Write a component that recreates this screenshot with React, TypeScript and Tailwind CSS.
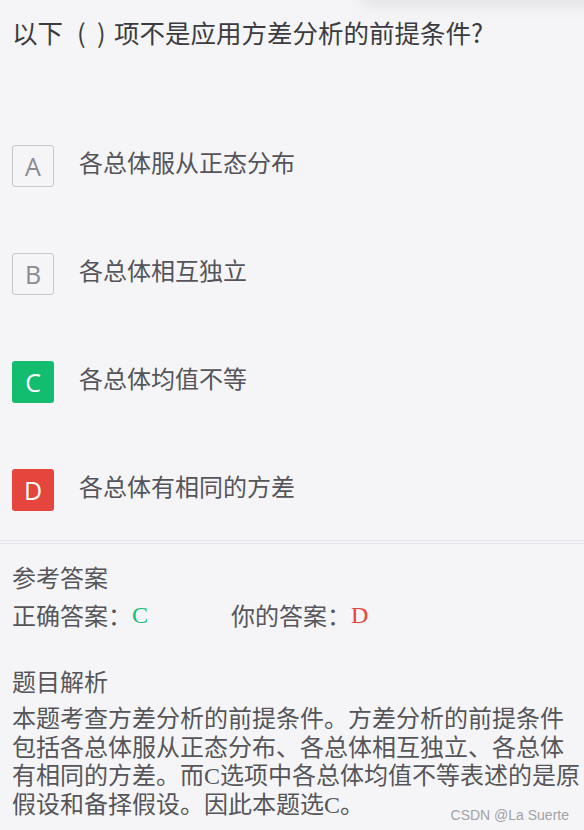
import React from "react";

const cjk = '"Noto Sans CJK SC", "Noto Sans", sans-serif';
const serifCjk = '"Liberation Serif", "Noto Sans CJK SC", serif';

function Option({ letter, text, kind }: { letter: string; text: string; kind: "plain" | "right" | "wrong" }) {
  const box =
    kind === "right"
      ? "bg-[#12bd70] text-white"
      : kind === "wrong"
      ? "bg-[#e5453d] text-white"
      : "border border-[#c6c6cb] text-[#8b8b91]";
  return (
    <div className="flex items-start">
      <div
        className={`w-[42px] h-[42px] rounded-[3px] flex items-center justify-center text-[25px] leading-none ${box}`}
        style={{ fontFamily: '"Open Sans", "Noto Sans", sans-serif' }}
      >
        {letter}
      </div>
      <div className="ml-[25px] text-[24px] leading-[34px] text-[#54545a]">{text}</div>
    </div>
  );
}

export default function App() {
  return (
    <div
      className="relative w-[584px] h-[830px] overflow-hidden bg-[#f5f5f7]"
      style={{ fontFamily: cjk }}
    >
      <div className="absolute -top-[14px] left-[360px] w-[260px] h-[22px] rounded-full bg-[#e6e6e9] blur-[6px]" />
      <div className="relative pl-3">
        <div className="pt-[15px] text-[25.5px] leading-[34px] text-[#3c3c40]">
          以下<span className="inline-block w-[1em] text-right pr-[3px]">(</span><span className="inline-block w-[1em] text-center">)</span>项不是应用方差分析的前提条件?
        </div>
        <div className="mt-[96px] flex flex-col gap-[66px]">
          <Option letter="A" text="各总体服从正态分布" kind="plain" />
          <Option letter="B" text="各总体相互独立" kind="plain" />
          <Option letter="C" text="各总体均值不等" kind="right" />
          <Option letter="D" text="各总体有相同的方差" kind="wrong" />
        </div>
      </div>
      <div className="mt-[29px] h-[4px] border-t border-b border-[#e4e2ea]" />
      <div className="relative pl-3 pr-[2px] text-[#55555a]">
        <div className="mt-[17px] text-[24px] leading-[32px]">参考答案</div>
        <div className="mt-[6px] flex text-[24px] leading-[32px]">
          <div className="w-[219px] flex">
            <span>正确答案：</span>
            <span className="text-[#17bf74]" style={{ fontFamily: serifCjk }}>C</span>
          </div>
          <div className="flex">
            <span>你的答案：</span>
            <span className="text-[#e8453c]" style={{ fontFamily: serifCjk }}>D</span>
          </div>
        </div>
        <div className="mt-[34px] text-[24px] leading-[32px]">题目解析</div>
        <div className="mt-[8px] text-[24px] leading-[28.7px]" style={{ fontFamily: serifCjk }}>
          本题考查方差分析的前提条件。方差分析的前提条件包括各总体服从正态分布、各总体相互独立、各总体有相同的方差。而C选项中各总体均值不等表述的是原假设和备择假设。因此本题选C。
        </div>
      </div>
      <div
        className="absolute right-[15px] bottom-[7px] text-[14px] leading-[16px] text-[#a2a2a6]"
        style={{ fontFamily: '"Liberation Sans", Arial, sans-serif' }}
      >
        CSDN @La Suerte
      </div>
    </div>
  );
}
